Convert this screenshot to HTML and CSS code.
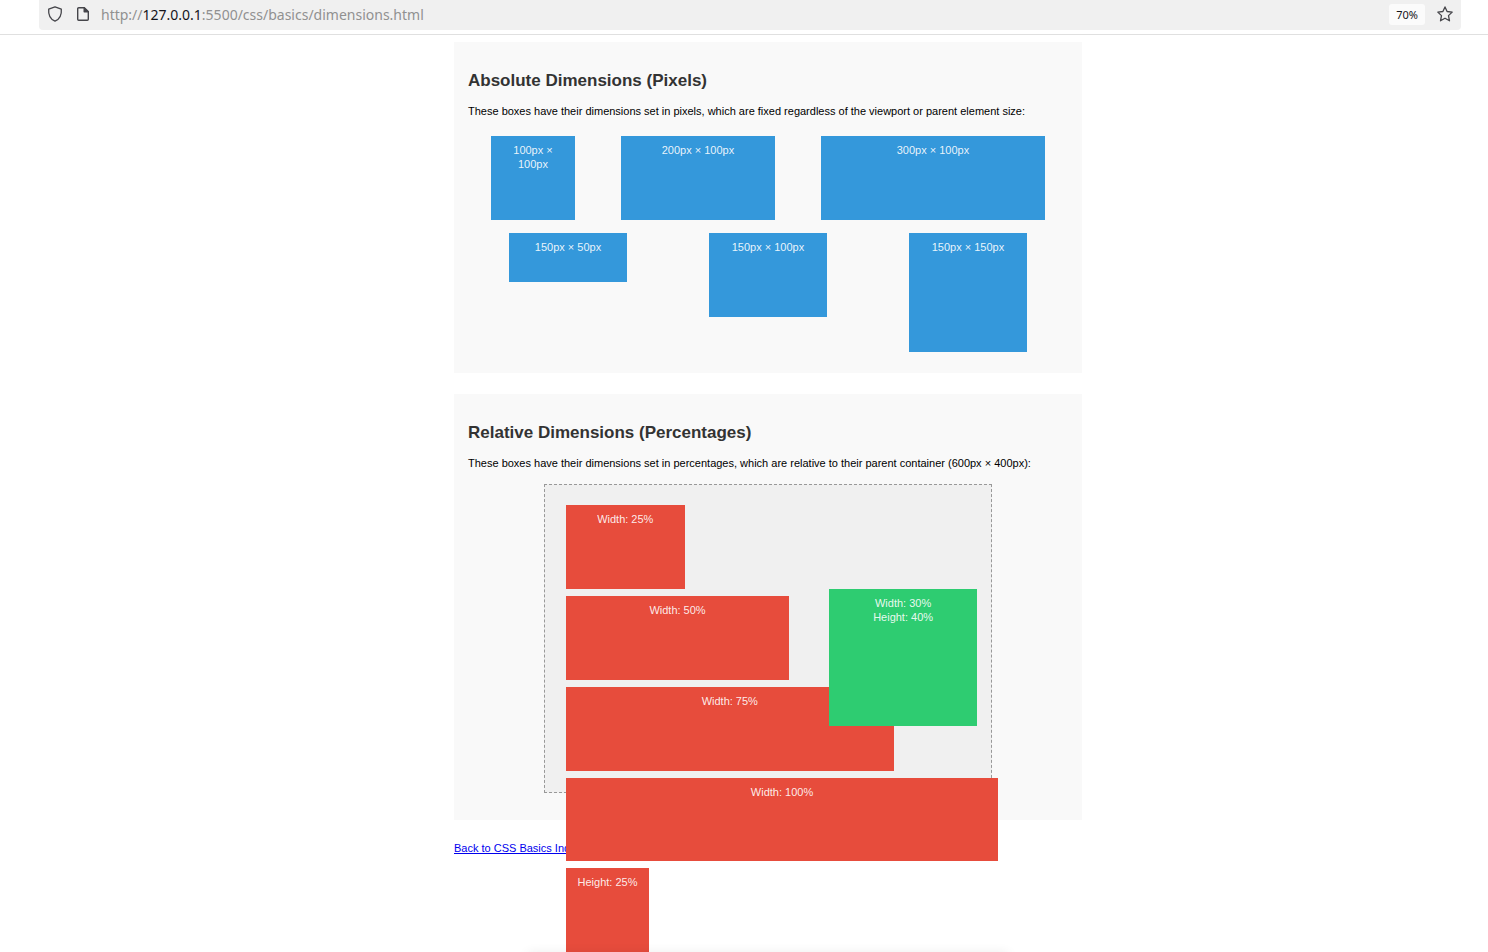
FILE: index.html
```html
<!DOCTYPE html>
<html lang="en">
<head>
<meta charset="utf-8">
<title>CSS Dimensions</title>
<link rel="stylesheet" href="styles.css">
</head>
<body>
<header class="toolbar">
  <div class="address-bar">
    <button class="icon-button" type="button" aria-label="Tracking protection">
      <svg width="16" height="16" viewBox="0 0 16 16" fill="none" stroke="#45454a" stroke-width="1.3" stroke-linejoin="round"><path d="M8 .8 14.3 3.1C14.8 8.5 12.6 13.2 8 15.2 3.4 13.2 1.2 8.5 1.7 3.1Z"/></svg>
    </button>
    <button class="icon-button site-info" type="button" aria-label="Site information">
      <svg width="16" height="16" viewBox="0 0 16 16" fill="none" stroke="#45454a" stroke-width="1.4" stroke-linejoin="round"><path d="M9.2 1.7H3.7a1 1 0 0 0-1 1v10.6a1 1 0 0 0 1 1h8.6a1 1 0 0 0 1-1V5.8Z"/><path d="M9.2 1.7v4.1h4.1Z" fill="#45454a"/></svg>
    </button>
    <div class="url">http://<span class="url-host">127.0.0.1</span>:5500/css/basics/dimensions.html</div>
    <button class="zoom-button" type="button">70%</button>
    <button class="icon-button" type="button" aria-label="Bookmark this page">
      <svg width="16" height="16" viewBox="0 0 16 16" fill="none" stroke="#45454a" stroke-width="1.3" stroke-linejoin="round"><path d="M8 .9 10.1 5.5 15.2 6.1 11.5 9.6 12.5 14.8 8 12.2 3.5 14.8 4.5 9.6 .8 6.1 5.9 5.5Z"/></svg>
    </button>
  </div>
</header>
<main class="page">
  <section class="example">
    <h2>Absolute Dimensions (Pixels)</h2>
    <p>These boxes have their dimensions set in pixels, which are fixed regardless of the viewport or parent element size:</p>
    <div class="row">
      <div class="box blue w-100 h-100">100px × 100px</div>
      <div class="box blue w-200 h-100">200px × 100px</div>
      <div class="box blue w-300 h-100">300px × 100px</div>
    </div>
    <div class="row">
      <div class="box blue w-150 h-50">150px × 50px</div>
      <div class="box blue w-150 h-100">150px × 100px</div>
      <div class="box blue w-150 h-150">150px × 150px</div>
    </div>
  </section>
  <section class="example">
    <h2>Relative Dimensions (Percentages)</h2>
    <p>These boxes have their dimensions set in percentages, which are relative to their parent container (600px × 400px):</p>
    <div class="parent">
      <div class="box red width-25">Width: 25%</div>
      <div class="box red width-50">Width: 50%</div>
      <div class="box red width-75">Width: 75%</div>
      <div class="box red width-full">Width: 100%</div>
      <div class="box red height-25">Height: 25%</div>
      <div class="box green">Width: 30%<br>Height: 40%</div>
    </div>
  </section>
  <a class="back" href="#">Back to CSS Basics Index</a>
</main>
<div class="bottom-shadow"></div>
</body>
</html>
```
FILE: styles.css
```css
* { box-sizing: border-box; }
html { height: 100%; }
body {
  display: flex;
  flex-direction: column;
  height: 100%;
  margin: 0;
  overflow: hidden;
  background: #fff;
  color: #000;
  font: 11px/14px "Liberation Sans", Arial, sans-serif;
}

/* Browser toolbar */
.toolbar {
  flex: none;
  padding: 0 27px 4px 39px;
  border-bottom: 1px solid #e0e0e0;
}
.address-bar {
  display: flex;
  align-items: center;
  height: 30px;
  padding: 0 8px;
  border-radius: 0 0 4px 4px;
  background: #f0f0f0;
}
.icon-button {
  display: flex;
  flex: none;
  margin: 0 12px 2px 0;
  padding: 0;
  border: 0;
  background: none;
}
.site-info { margin-right: 10px; }
.icon-button:last-child { margin-right: 0; }
.url {
  flex: 1;
  padding-bottom: 1px;
  color: #919191;
  font: 14px/20px "Noto Sans", sans-serif;
  white-space: nowrap;
}
.url-host { color: #15141a; }
.zoom-button {
  height: 21px;
  margin: 0 12px 1px 0;
  padding: 0 7px;
  border: 0;
  border-radius: 3px;
  background: #fbfbfb;
  color: #15141a;
  font: 11px/21px "Noto Sans", sans-serif;
}

/* Page */
.page {
  flex: 1;
  width: 100%;
  max-width: 676px;
  margin: 0 auto;
  padding: 7px 0 0 48px;
}
.page { margin-left: calc(50% - 338px); }
.example {
  margin-bottom: 21px;
  padding: 14px;
  background: #f9f9f9;
}
.example h2 {
  margin: 15px 0 13px;
  color: #333;
  font-size: 17px;
  line-height: 20px;
}
.example p { margin: 0 0 11px; }
.row {
  display: flex;
  justify-content: space-around;
  align-items: flex-start;
  padding: 7px 0;
}
.row + .row { padding-top: 6px; }
.box {
  padding: 7px;
  color: rgba(255, 255, 255, 0.9);
  text-align: center;
}
.blue { background: #3498db; }
.w-100 { width: 84px; }
.w-150 { width: 118px; }
.w-200 { width: 154px; }
.w-300 { width: 224px; }
.h-50 { height: 49px; }
.h-100 { height: 84px; }
.h-150 { height: 119px; }

.parent {
  position: relative;
  width: 448px;
  height: 309px;
  margin: 14px auto 13px;
  padding: 13px 14px;
  border: 1px dashed #999;
  background: #f0f0f0;
}
.red {
  position: relative;
  box-sizing: content-box;
  height: 70px;
  margin: 7px;
  background: #e74c3c;
}
.width-25 { width: 25%; }
.width-50 { width: 50%; }
.width-75 { width: 75%; }
.width-full {
  width: 100%;
  height: 69px;
}
.height-25 {
  width: 69px;
  height: 25%;
}
.green {
  position: absolute;
  top: 104px;
  right: 14px;
  box-sizing: content-box;
  width: 30%;
  height: 40%;
  background: #2ecc71;
}
.back { color: #0000ee; }

.bottom-shadow {
  position: fixed;
  bottom: -8px;
  left: 50%;
  width: 480px;
  height: 6px;
  margin-left: -216px;
  box-shadow: 0 0 12px rgba(0, 0, 0, 0.12);
}
```
